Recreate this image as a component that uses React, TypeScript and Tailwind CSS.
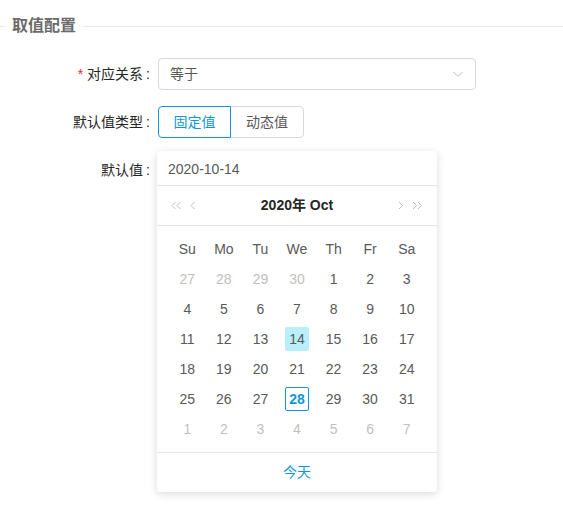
import { useState } from 'react';

const FONT = '"Liberation Sans", "Noto Sans CJK SC", sans-serif';

const weekDays = ['Su', 'Mo', 'Tu', 'We', 'Th', 'Fr', 'Sa'];

// October 2020, starting from the Sunday before the 1st
function buildDays() {
    const days: { day: number; current: boolean }[] = [];
    [27, 28, 29, 30].forEach(d => days.push({ day: d, current: false }));
    for (let d = 1; d <= 31; d++) days.push({ day: d, current: true });
    for (let d = 1; d <= 7; d++) days.push({ day: d, current: false });
    return days;
}

function Chevron({ dir, double }: { dir: 'left' | 'right'; double?: boolean }) {
    const pts = dir === 'left' ? '4.5,1 1,4.5 4.5,8' : '1,1 4.5,4.5 1,8';
    return (
        <svg width={double ? 11 : 6} height="10" viewBox={double ? '0 0 11 10' : '0 0 6 10'} fill="none" stroke="#bfbfbf" strokeWidth="1">
            <polyline points={pts} />
            {double && <polyline points={pts} transform="translate(5 0)" />}
        </svg>
    );
}

function Calendar() {
    const [selected, setSelected] = useState(14);
    const days = buildDays();
    const rows = [0, 1, 2, 3, 4, 5].map(r => days.slice(r * 7, r * 7 + 7));

    return (
        <div className="absolute left-[-1px] top-[-3px] w-[280px] bg-white rounded shadow-[0_2px_8px_rgba(0,0,0,0.15)] z-10">
            <div className="h-[35px] flex items-center pt-[3px] px-[11px] border-b border-[#e8e8e8] text-[14px] text-[#595959]">
                2020-10-14
            </div>
            <div className="h-[40px] flex items-center justify-between px-[14px] border-b border-[#e8e8e8]">
                <div className="flex items-center gap-[8px]">
                    <Chevron dir="left" double />
                    <Chevron dir="left" />
                </div>
                <span className="text-[14px] font-bold text-[#262626]">2020年 Oct</span>
                <div className="flex items-center gap-[8px]">
                    <Chevron dir="right" />
                    <Chevron dir="right" double />
                </div>
            </div>
            <div className="px-[12px] py-[8px]">
                <div className="grid grid-cols-7 h-[30px] items-center text-center text-[14px] text-[#595959]">
                    {weekDays.map(w => <span key={w}>{w}</span>)}
                </div>
                {rows.map((row, i) => (
                    <div key={i} className="grid grid-cols-7 h-[30px] items-center">
                        {row.map((d, j) => {
                            const isSel = d.current && d.day === selected;
                            const isToday = d.current && d.day === 28;
                            return (
                                <div key={j} className="flex justify-center">
                                    <button
                                        type="button"
                                        onClick={() => d.current && setSelected(d.day)}
                                        className={`w-[24px] h-[24px] flex items-center justify-center rounded-[2px] text-[14px] leading-none border ${
                                            isToday
                                                ? 'border-[#1296db] text-[#1296db] font-bold'
                                                : 'border-transparent'
                                        } ${isSel ? 'bg-[#baeefb]' : ''} ${
                                            !isToday ? (d.current ? 'text-[#595959]' : 'text-[#bfbfbf]') : ''
                                        }`}
                                    >
                                        {d.day}
                                    </button>
                                </div>
                            );
                        })}
                    </div>
                ))}
            </div>
            <div className="h-[40px] flex items-center justify-center border-t border-[#e8e8e8] text-[14px] text-[#1296db]">
                今天
            </div>
        </div>
    );
}

function FormLabel({ children, required }: { children: string; required?: boolean }) {
    return (
        <div className="w-[158px] shrink-0 flex justify-end items-center text-[14px] text-[#262626]">
            {required && <span className="text-[#f5222d] mr-[4px] text-[14px]">*</span>}
            <span>{children}</span>
            <span className="ml-[3px] mr-[8px]">:</span>
        </div>
    );
}

export default function App() {
    const [valueType, setValueType] = useState('fixed');

    return (
        <div className="w-[563px] h-[506px] bg-white" style={{ fontFamily: FONT }}>
            {/* Section title */}
            <div className="flex items-center pt-[15px]">
                <div className="w-[5px] h-px bg-[#e8e8e8]" />
                <span className="px-[7px] text-[16px] font-bold text-[#6b6b6b] leading-[22px]">取值配置</span>
                <div className="flex-1 h-px bg-[#e8e8e8]" />
            </div>

            <div className="mt-[21px] flex flex-col gap-[16px]">
                <div className="flex items-center h-[32px]">
                    <FormLabel required>对应关系</FormLabel>
                    <div className="w-[318px] h-[32px] border border-[#d9d9d9] rounded flex items-center justify-between pl-[11px] pr-[11px] text-[14px] text-[#595959]">
                        <span>等于</span>
                        <svg width="12" height="12" viewBox="0 0 12 12" fill="none" stroke="#bfbfbf" strokeWidth="1">
                            <polyline points="1.5,4 6,8.5 10.5,4" />
                        </svg>
                    </div>
                </div>

                <div className="flex items-center h-[32px]">
                    <FormLabel>默认值类型</FormLabel>
                    <div className="flex text-[14px]">
                        <button
                            type="button"
                            onClick={() => setValueType('fixed')}
                            className={`h-[32px] w-[73px] rounded-l border ${valueType === 'fixed' ? 'border-[#1296db] text-[#1296db] z-[1]' : 'border-[#d9d9d9] text-[#595959]'}`}
                        >
                            固定值
                        </button>
                        <button
                            type="button"
                            onClick={() => setValueType('dynamic')}
                            className={`h-[32px] w-[74px] -ml-px rounded-r border ${valueType === 'dynamic' ? 'border-[#1296db] text-[#1296db] z-[1]' : 'border-[#d9d9d9] text-[#595959]'}`}
                        >
                            动态值
                        </button>
                    </div>
                </div>

                <div className="flex items-center h-[32px]">
                    <FormLabel>默认值</FormLabel>
                    <div className="relative w-[280px] h-[32px]">
                        <Calendar />
                    </div>
                </div>
            </div>
        </div>
    );
}
